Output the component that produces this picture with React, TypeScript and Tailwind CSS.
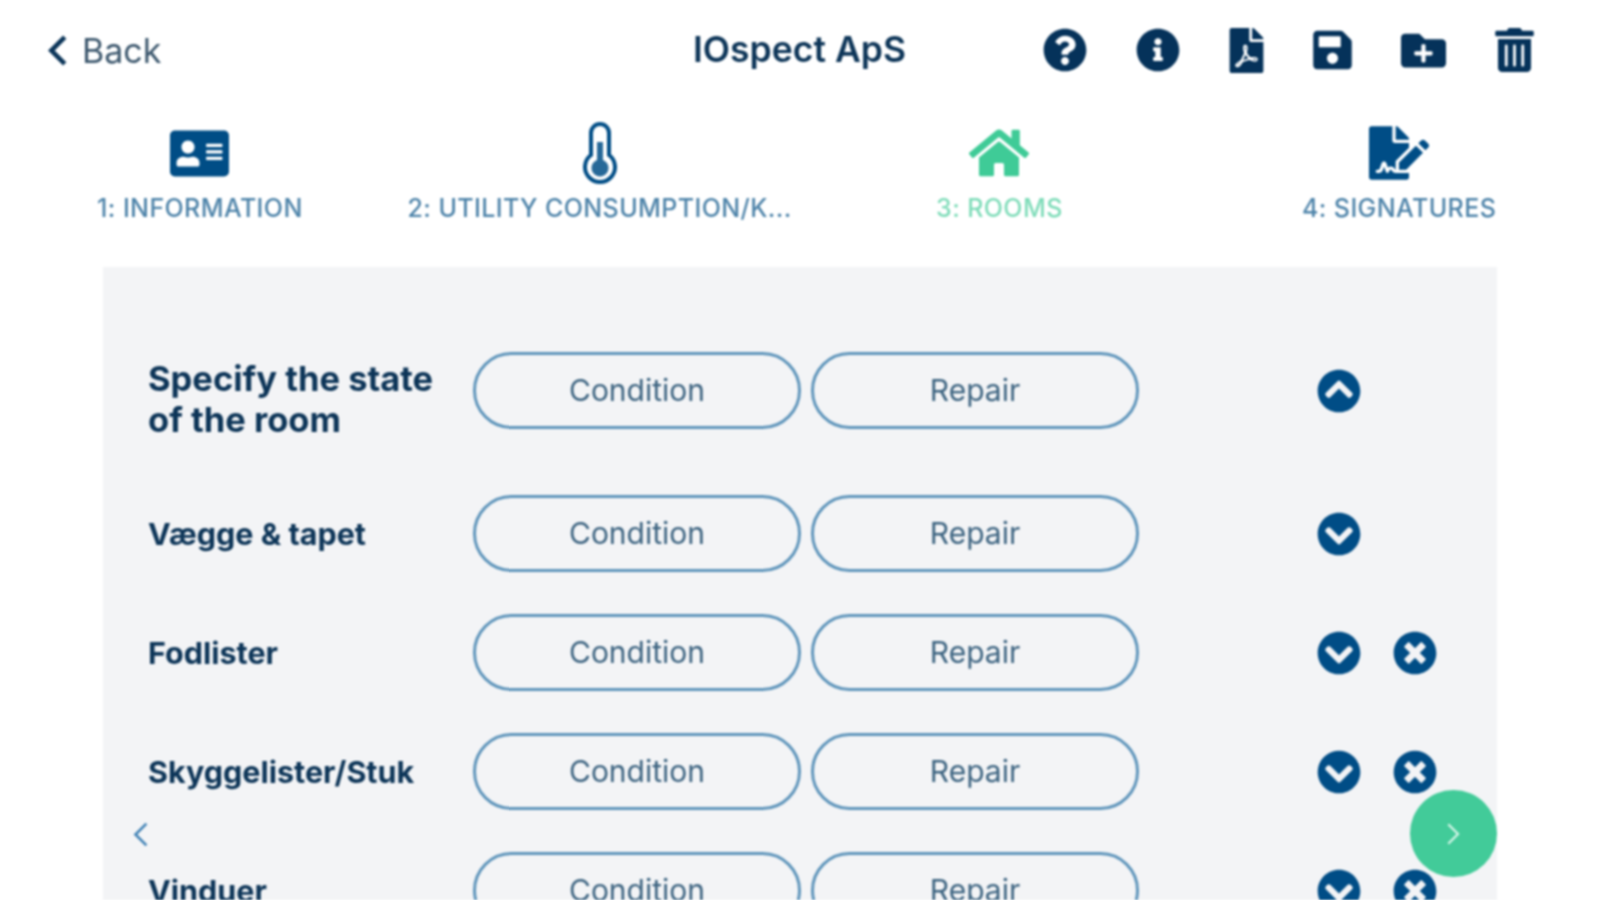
import {
  FaAddressCard,
  FaChevronCircleDown,
  FaChevronCircleUp,
  FaFilePdf,
  FaFileSignature,
  FaFolderPlus,
  FaHome,
  FaInfoCircle,
  FaQuestionCircle,
  FaSave,
  FaTimesCircle,
  FaTrashAlt,
} from "react-icons/fa";

const rows = [
  { name: "Vægge & tapet", remove: false },
  { name: "Fodlister", remove: true },
  { name: "Skyggelister/Stuk", remove: true },
  { name: "Vinduer", remove: true },
];

function Thermometer() {
  return (
    <svg viewBox="0 0 34 62" className="w-[34px] h-[62px]">
      <path
        d="M8 11a9 9 0 0 1 18 0v22a15 15 0 1 1-18 0z"
        fill="none"
        stroke="#004d86"
        strokeWidth="4"
      />
      <path d="M14 20h6v18a8.5 8.5 0 1 1-6 0z" fill="#004d86" opacity="0.85" />
    </svg>
  );
}

function Chevron({ dir, className, stroke }: { dir: "left" | "right"; className: string; stroke: number }) {
  return (
    <svg viewBox="0 0 20 32" className={className} fill="none" stroke="currentColor" strokeWidth={stroke}>
      <path d={dir === "left" ? "M17 3 4 16l13 13" : "M3 3l13 13L3 29"} />
    </svg>
  );
}

function Tab({ label, icon, active }: { label: string; icon: React.ReactNode; active?: boolean }) {
  return (
    <div className="flex flex-col items-center">
      <div className="h-[64px] flex items-center justify-center">{icon}</div>
      <div
        className={`mt-[10px] text-[25px] leading-[26px] font-medium tracking-[0.4px] whitespace-nowrap ${
          active ? "text-[#7fdcb9]" : "text-[#4d83a9]"
        }`}
      >
        {label}
      </div>
    </div>
  );
}

function Row({ name, up, remove }: { name: string; up?: boolean; remove?: boolean }) {
  return (
    <div className="flex items-center">
      {up ? (
        <div className="w-[325px] h-[77px] shrink-0 pr-[20px] pt-[6px] text-[#0d3558] font-bold text-[34.5px] leading-[41px]">
          {name}
        </div>
      ) : (
        <div className="w-[325px] shrink-0 text-[#0d3558] font-bold text-[30.5px] leading-[41px]">{name}</div>
      )}
      <div className="flex gap-[10px]">
        <button className="w-[328px] h-[77px] rounded-full border-[3px] border-[#5f95bb] text-[30px] text-[#3c6380]">
          Condition
        </button>
        <button className="w-[328px] h-[77px] rounded-full border-[3px] border-[#5f95bb] text-[30px] text-[#3c6380]">
          Repair
        </button>
      </div>
      <div className="ml-[178px] flex items-center gap-[32px] text-[#004d86]">
        {up ? <FaChevronCircleUp size={44} /> : <FaChevronCircleDown size={44} />}
        {remove && <FaTimesCircle size={44} />}
      </div>
    </div>
  );
}

export default function App() {
  return (
    <div className="relative h-screen overflow-hidden bg-white font-['Inter',sans-serif] blur-[1px]">
      <header className="grid grid-cols-[minmax(0,1fr)_auto_minmax(0,1fr)] items-center h-[100px] px-[65px]">
        <div className="flex items-center gap-[14px] -ml-[18px] text-[#3d586e]">
          <Chevron dir="left" stroke={4.5} className="w-[21px] h-[33px] text-[#0b3559]" />
          <span className="text-[34px]">Back</span>
        </div>
        <div className="text-[35.5px] font-semibold text-[#0d3558] whitespace-nowrap">IOspect ApS</div>
        <div className="flex items-center justify-end gap-[49px] text-[#05325a]">
          <FaQuestionCircle size={44} />
          <FaInfoCircle size={44} />
          <FaFilePdf size={45} className="w-[35px]" />
          <FaSave size={44} className="w-[39px]" />
          <FaFolderPlus size={45} />
          <FaTrashAlt size={44} className="w-[39px]" />
        </div>
      </header>

      <nav className="grid grid-cols-4 pt-[21px] h-[167px]">
        <Tab label="1: INFORMATION" icon={<FaAddressCard size={59} color="#004d86" />} />
        <Tab label="2: UTILITY CONSUMPTION/K..." icon={<Thermometer />} />
        <Tab label="3: ROOMS" active icon={<FaHome size={60} color="#3fcb97" />} />
        <Tab label="4: SIGNATURES" icon={<FaFileSignature size={60} color="#004d86" />} />
      </nav>

      <main className="relative mx-[103px] w-[1394px] h-[633px] bg-[#f3f4f6] pl-[45px] pt-[85px] overflow-hidden">
        <Row name="Specify the state of the room" up />
        <div className="flex flex-col gap-[42px] mt-[66px]">
          {rows.map((r) => (
            <Row key={r.name} name={r.name} remove={r.remove} />
          ))}
        </div>
      </main>

      <Chevron dir="left" stroke={3} className="absolute left-[132px] top-[821px] w-[17px] h-[27px] text-[#3f81b5]" />
      <div className="absolute left-[1410px] top-[790px] w-[87px] h-[87px] rounded-full bg-[#42cb99] flex items-center justify-center text-[#d5f5e8]">
        <Chevron dir="right" stroke={3} className="w-[15px] h-[24px]" />
      </div>
    </div>
  );
}
